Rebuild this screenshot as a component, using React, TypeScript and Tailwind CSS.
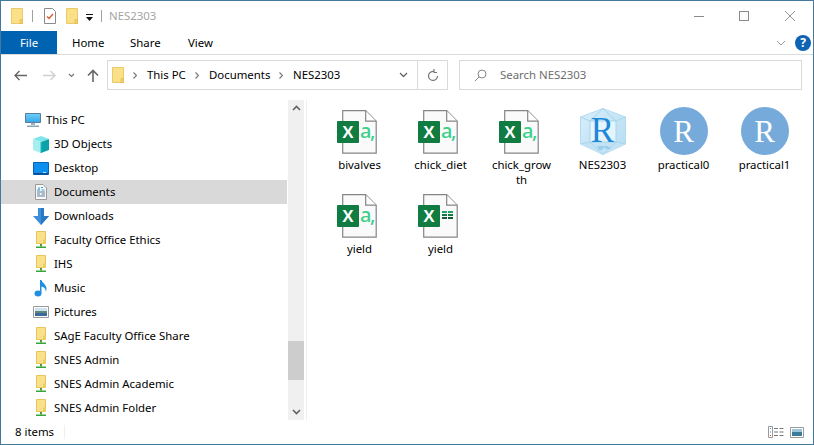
import React from "react";

const font = { fontFamily: '"Noto Sans", "Open Sans", sans-serif' };

function Folder() {
  return (
    <svg width="12" height="16" viewBox="0 0 12 16" className="shrink-0">
      <path d="M.5.5h11v15H.5z" fill="#fbe08a" stroke="#eccb66" />
      <path d="M9 11.500h2.500v4H9z" fill="#f4cf6c" stroke="#e3b94e" strokeWidth=".7" />
    </svg>
  );
}

function NetFolder() {
  return (
    <svg width="10" height="18" viewBox="0 0 10 18" className="shrink-0">
      <path d="M.5.5h9v12h-9z" fill="#fbe08a" stroke="#e9c45c" />
      <path d="M7 8.500h2.500v4H7z" fill="#f0cc70" />
      <path d="M4 13h2v2.500H4z" fill="#3aa33a" />
      <path d="M0 15.500h10V17H0z" fill="#3aa33a" />
    </svg>
  );
}

function PcIcon() {
  return (
    <svg width="16" height="14" viewBox="0 0 16 14" className="shrink-0">
      <defs>
        <linearGradient id="pcg" x1="0" y1="0" x2="0" y2="1">
          <stop offset="0" stopColor="#6fd0f8" />
          <stop offset="1" stopColor="#36a6ea" />
        </linearGradient>
      </defs>
      <path d="M.5.5h15v9H.5z" fill="url(#pcg)" stroke="#5a7d9b" />
      <path d="M6 10h4v2H6z" fill="#9fb4c4" />
      <path d="M2 12.500h12V14H2z" fill="#8aa3b6" />
    </svg>
  );
}

function CubeIcon() {
  return (
    <svg width="16" height="17" viewBox="0 0 16 17" className="shrink-0">
      <path d="M8 0l8 3-8 3-8-3z" fill="#7de6ea" />
      <path d="M0 3l8 3v11l-8-3z" fill="#a6eef0" />
      <path d="M16 3L8 6v11l8-3z" fill="#0da2a8" />
      <path d="M8 6v11" stroke="#1cc0c6" />
    </svg>
  );
}

function DesktopIcon() {
  return (
    <svg width="16" height="13" viewBox="0 0 16 13" className="shrink-0">
      <path d="M.5.5h15v12H.5z" fill="#0d8ff0" stroke="#0a62b4" />
      <path d="M1 11h14v1.500H1z" fill="#0a4f96" />
      <path d="M10 10h3v1h-3z" fill="#bfe0fa" />
    </svg>
  );
}

function DocsIcon() {
  return (
    <svg width="12" height="16" viewBox="0 0 12 16" className="shrink-0">
      <path d="M.5.5h7.500l3.500 3.500v11.500H.5z" fill="#f8f8f8" stroke="#9a9a9a" />
      <path d="M2 8h8M2 12h8M2 10h3M6.500 10h3.500" stroke="#5b7f9c" />
      <path d="M2 6h3M4 3v3M6 3.500h2M6.500 6h3" stroke="#3a9ad9" />
    </svg>
  );
}

function DownloadIcon() {
  return (
    <svg width="16" height="17" viewBox="0 0 16 17" className="shrink-0">
      <path d="M5 0h6v8h5l-8 9-8-9h5z" fill="#3c8fdc" />
      <path d="M8 0h3v8h5l-8 9z" fill="#2a78c4" />
    </svg>
  );
}

function MusicIcon() {
  return (
    <svg width="14" height="17" viewBox="0 0 14 17" className="shrink-0">
      <ellipse cx="4" cy="13.500" rx="3.500" ry="3" fill="#1f8fe0" />
      <path d="M6 13V0h1.500c.5 3 5 4 5 9 0 1-.3 2-.8 2.500.3-3-2.200-4.500-4.200-5V13z" fill="#1f8fe0" />
    </svg>
  );
}

function PicturesIcon() {
  return (
    <svg width="16" height="12" viewBox="0 0 16 12" className="shrink-0">
      <path d="M.5.5h15v11H.5z" fill="#fff" stroke="#9a9a9a" />
      <path d="M2 2h12v3H2z" fill="#cfe3ef" />
      <path d="M2 5h12v2H2z" fill="#5d8a7a" />
      <path d="M2 7h12v3H2z" fill="#3c6a9a" />
    </svg>
  );
}

function XlIcon({ kind }: { kind: "csv" | "xlsx" }) {
  return (
    <div className="relative w-[45px] h-[44px] mx-auto mt-[5px]">
      <svg width="35" height="44" viewBox="0 0 35 44" className="absolute left-[5px] top-0">
        <path d="M.7.700h23l10.500 10.500v32H.7z" fill="#fafafa" stroke="#858585" strokeWidth="1.200" />
        <path d="M23.700.700v10.500h10.500" fill="#fff" stroke="#858585" strokeWidth="1.200" />
      </svg>
      <div className="absolute left-0 top-[11px] w-[22px] h-[22px] rounded-[1px] bg-[#107c41] flex items-center justify-center text-white text-[17px] font-bold leading-none" style={{ fontFamily: '"Liberation Sans", sans-serif' }}>
        X
      </div>
      {kind === "csv" ? (
        <div className="absolute left-[23px] top-[9px] text-[#3ad08c] text-[20px] font-medium leading-[24px] tracking-[-1.5px]" style={font}>
          a,
        </div>
      ) : (
        <div className="absolute left-[24px] top-[17px] w-[11px] flex flex-col gap-[1px]">
          {["#21a366", "#107c41", "#185c37"].map((c) => (
            <div key={c} className="flex gap-[1px]">
              <div className="w-[5px] h-[2px]" style={{ backgroundColor: c }} />
              <div className="w-[5px] h-[2px]" style={{ backgroundColor: c }} />
            </div>
          ))}
        </div>
      )}
    </div>
  );
}

function RIcon() {
  return (
    <div className="w-[48px] h-[48px] mt-[2px] rounded-full bg-[#75aadb] mx-auto flex items-center justify-center text-white text-[31px] leading-none" style={{ fontFamily: '"Liberation Serif", serif' }}>
      R
    </div>
  );
}

function RProjIcon() {
  return (
    <div className="relative w-[46px] h-[48px] mt-[3px] mx-auto">
      <svg width="46" height="47" viewBox="0 0 46 47" className="absolute inset-0">
        <defs>
          <linearGradient id="cubeg" x1="0" y1="0" x2="1" y2="1">
            <stop offset="0" stopColor="#d8eefa" />
            <stop offset="1" stopColor="#b4dcf2" />
          </linearGradient>
        </defs>
        <path d="M23 .5L45.500 9v27L23 46.500.5 36V9z" fill="url(#cubeg)" stroke="#b5dcef" />
        <path d="M10 13h26v21H10z" fill="#eef8fd" opacity=".8" />
        <path d="M10 34h26l9.500 2L23 46.500.5 36z" fill="#c3e3f5" />
        <path d="M.5 9L10 13h26l9.500-4M10 13v21M36 13v21M.5 36L10 34h26l9.500 2M23 .5L10 13M23 .5L36 13M10 34l13 12.500L36 34" fill="none" stroke="#a5d5ec" />
        <path d="M17 38h11l3 3h-5l-2-2-2 3h-3z" fill="#7fbfe8" opacity=".6" />
      </svg>
      <div className="absolute inset-x-0 top-[5px] text-center text-[#1e88d8] text-[35px] leading-none" style={{ fontFamily: '"Liberation Serif", serif' }}>
        R
      </div>
    </div>
  );
}

function Chev() {
  return (
    <svg width="4" height="7" viewBox="0 0 4 7" className="shrink-0">
      <path d="M.5.5l3 3-3 3" fill="none" stroke="#777" strokeWidth="1.200" />
    </svg>
  );
}

const nav: [React.ReactNode, string, number?][] = [
  [<CubeIcon />, "3D Objects"],
  [<DesktopIcon />, "Desktop"],
  [<DocsIcon />, "Documents", 1],
  [<DownloadIcon />, "Downloads"],
  [<NetFolder />, "Faculty Office Ethics"],
  [<NetFolder />, "IHS"],
  [<MusicIcon />, "Music"],
  [<PicturesIcon />, "Pictures"],
  [<NetFolder />, "SAgE Faculty Office Share"],
  [<NetFolder />, "SNES Admin"],
  [<NetFolder />, "SNES Admin Academic"],
  [<NetFolder />, "SNES Admin Folder"],
];

const files: [React.ReactNode, string][] = [
  [<XlIcon kind="csv" />, "bivalves"],
  [<XlIcon kind="csv" />, "chick_diet"],
  [<XlIcon kind="csv" />, "chick_growth"],
  [<RProjIcon />, "NES2303"],
  [<RIcon />, "practical0"],
  [<RIcon />, "practical1"],
  [<XlIcon kind="csv" />, "yield"],
  [<XlIcon kind="xlsx" />, "yield"],
];

export default function App() {
  return (
    <div className="w-[814px] h-[445px] bg-white border border-[#44799b] flex flex-col overflow-hidden text-[11.4px] text-black" style={font}>
      {/* Title bar */}
      <div className="h-[30px] flex items-center shrink-0">
        <div className="ml-[10px]"><Folder /></div>
        <div className="ml-[9px] w-px h-[12px] bg-[#a0a0a0]" />
        <svg width="12" height="16" viewBox="0 0 12 16" className="ml-[11px]">
          <path d="M.5.5h8l3 3v12H.5z" fill="#fff" stroke="#8a8a8a" />
          <path d="M3 8.500l2 2L9 6" fill="none" stroke="#e2562a" strokeWidth="1.300" />
        </svg>
        <div className="ml-[10px]"><Folder /></div>
        <svg width="9" height="7" viewBox="0 0 9 7" className="ml-[7px] mt-[2px]">
          <path d="M1 0h7v1H1z" fill="#111" />
          <path d="M1 3h7L4.500 7z" fill="#111" />
        </svg>
        <div className="ml-[7px] w-px h-[12px] bg-[#a0a0a0]" />
        <div className="ml-[7px] text-[#a4a4a4]">NES2303</div>
        <div className="ml-auto flex items-center mr-[18px]">
          <div className="w-[10px] h-px bg-[#8a8a8a]" />
          <div className="ml-[35px] w-[10px] h-[10px] border border-[#8a8a8a]" />
          <svg width="10" height="10" viewBox="0 0 10 10" className="ml-[36px]">
            <path d="M0 0l10 10M10 0L0 10" stroke="#8a8a8a" strokeWidth=".9" />
          </svg>
        </div>
      </div>

      {/* Ribbon tabs */}
      <div className="h-[24px] flex items-stretch shrink-0 border-b border-[#dadbdc]">
        <div className="w-[56px] bg-[#0063b1] text-white flex items-center justify-center">File</div>
        <div className="ml-[15px] w-[58px] flex items-center">Home</div>
        <div className="w-[58px] flex items-center">Share</div>
        <div className="flex items-center">View</div>
        <div className="ml-auto flex items-center mr-[2px]">
          <svg width="10" height="6" viewBox="0 0 10 6">
            <path d="M1 1l4 4 4-4" fill="none" stroke="#9a9a9a" />
          </svg>
          <div className="ml-[9px] w-[16px] h-[16px] rounded-full bg-[#0f63b5] text-white text-[12px] font-bold leading-[16px] text-center">?</div>
        </div>
      </div>

      {/* Address row */}
      <div className="h-[41px] shrink-0 flex items-start pt-[5px]">
        <div className="h-[30px] flex items-center">
          <svg width="13" height="11" viewBox="0 0 13 11" className="ml-[13px]">
            <path d="M13 5.500H1M5.500 1L1 5.500 5.500 10" fill="none" stroke="#666" strokeWidth="1.400" />
          </svg>
          <svg width="13" height="11" viewBox="0 0 13 11" className="ml-[16px]">
            <path d="M0 5.500h12M7.500 1L12 5.500 7.500 10" fill="none" stroke="#d0d0d0" strokeWidth="1.400" />
          </svg>
          <svg width="7" height="5" viewBox="0 0 7 5" className="ml-[12px]">
            <path d="M1 1l2.500 2.500L6 1" fill="none" stroke="#777" strokeWidth="1.200" />
          </svg>
          <svg width="12" height="13" viewBox="0 0 12 13" className="ml-[12px]">
            <path d="M6 13V1.500M1 6.500l5-5 5 5" fill="none" stroke="#666" strokeWidth="1.600" />
          </svg>
        </div>
        <div className="ml-[8px] w-[341px] h-[30px] border border-[#d9d9d9] flex items-center">
          <div className="ml-[4px]"><Folder /></div>
          <div className="ml-[9px]"><Chev /></div>
          <span className="ml-[10px] w-[48px]">This PC</span>
          <Chev />
          <span className="ml-[10px] w-[70px]">Documents</span>
          <Chev />
          <span className="ml-[10px]">NES2303</span>
          <svg width="9" height="6" viewBox="0 0 9 6" className="ml-auto mr-[9px]">
            <path d="M1 1l3.500 3.500L8 1" fill="none" stroke="#666" strokeWidth="1.300" />
          </svg>
          <div className="h-full w-[30px] border-l border-[#d9d9d9] flex items-center justify-center">
            <svg width="12" height="13" viewBox="0 0 12 13">
              <path d="M10.500 7a4.500 4.500 0 1 1-3-4.300M7 0v3.500h3" fill="none" stroke="#777" strokeWidth="1.200" />
            </svg>
          </div>
        </div>
        <div className="ml-[11px] w-[343px] h-[30px] border border-[#d9d9d9] flex items-center">
          <svg width="13" height="13" viewBox="0 0 13 13" className="ml-[14px]">
            <circle cx="8" cy="5" r="4" fill="none" stroke="#888" />
            <path d="M5 8l-4 4" stroke="#888" />
          </svg>
          <span className="ml-[13px] text-[#6d6d6d]">Search NES2303</span>
        </div>
      </div>

      {/* Main */}
      <div className="flex-1 min-h-0 flex">
        <div className="w-[286px] shrink-0 pt-[12px]">
          <div className="h-[24px] flex items-center">
            <div className="ml-[24px] w-[16px] flex justify-center"><PcIcon /></div>
            <span className="ml-[5px]">This PC</span>
          </div>
          {nav.map(([icon, label, sel]) => (
            <div key={label} className={`h-[24px] flex items-center ${sel ? "bg-[#d9d9d9]" : ""}`}>
              <div className="ml-[32px] w-[16px] flex justify-center">{icon}</div>
              <span className="ml-[5px] whitespace-nowrap">{label}</span>
            </div>
          ))}
        </div>
        <div className="ml-[1px] w-[16px] shrink-0 bg-[#f0f0f0] flex flex-col items-center justify-between relative mt-[4px]">
          <svg width="9" height="6" viewBox="0 0 9 6" className="mt-[5px]">
            <path d="M1 5l3.500-3.500L8 5" fill="none" stroke="#606060" strokeWidth="1.600" />
          </svg>
          <div className="absolute left-0 top-[241px] w-[16px] h-[39px] bg-[#cdcdcd]" />
          <svg width="9" height="6" viewBox="0 0 9 6" className="mb-[5px]">
            <path d="M1 1l3.500 3.500L8 1" fill="none" stroke="#606060" strokeWidth="1.600" />
          </svg>
        </div>
        <div className="ml-[2px] w-px bg-[#efefef] mt-[4px]" />
        <div className="flex-1 min-w-0 pl-[12px] pt-[8px] flex flex-wrap content-start">
          {files.map(([icon, label], i) => (
            <div key={i} className="w-[81px] h-[84px] pt-[1px] flex flex-col items-center">
              <div className="h-[50px] w-full">{icon}</div>
              <div className="w-[62px] text-center leading-[15px] mt-[2px] break-all">{label}</div>
            </div>
          ))}
        </div>
      </div>

      {/* Status */}
      <div className="h-[24px] shrink-0 flex items-center">
        <span className="ml-[14px]">8 items</span>
        <div className="ml-[10px] w-px h-[14px] bg-[#efefef]" />
        <div className="ml-auto flex items-center mr-[9px] gap-[6px]">
          <svg width="16" height="12" viewBox="0 0 16 12">
            <path d="M.5.5h4v11h-4z" fill="#fff" stroke="#9a9a9a" />
            <path d="M2 2h1v1H2z" fill="#3a9ad9" />
            <path d="M2 5.500h1v1H2z" fill="#3a7ad9" />
            <path d="M2 9h1v1H2z" fill="#d03a2a" />
            <path d="M6 2.500h4M11.500 2.500h4M6 6h4M11.500 6h4M6 9.500h4M11.500 9.500h4" stroke="#777" />
          </svg>
          <svg width="14" height="11" viewBox="0 0 14 11">
            <path d="M.5.5h13v10H.5z" fill="#fff" stroke="#9a9a9a" />
            <path d="M2 2h10v3H2z" fill="#9cc4dc" />
            <path d="M2 5h10v4H2z" fill="#3c7a9a" />
          </svg>
        </div>
      </div>
    </div>
  );
}
